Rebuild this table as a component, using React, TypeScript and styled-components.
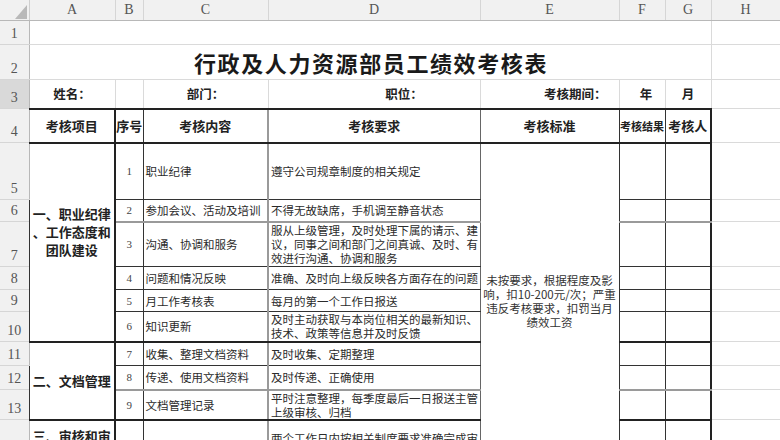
import React from 'react';
import styled, { createGlobalStyle } from 'styled-components';

const GlobalStyle = createGlobalStyle`
  html, body { margin: 0; padding: 0; background: #ffffff; overflow: hidden; }
`;

type Edge = 'grid' | 'thin' | 'mid' | 'thick' | 'gray' | 'none';
const edges: Record<Edge, string> = {
  grid: '1px solid #dadada',
  thin: '1px solid #333333',
  mid: '1px solid #666666',
  thick: '2px solid #222222',
  gray: '2px solid #9a9a9a',
  none: 'none',
};

const Sheet = styled.table`
  border-collapse: collapse;
  table-layout: fixed;
  width: 780px;
  font-family: "Noto Sans CJK SC", sans-serif;
  color: #2b2b2b;
`;

const Col = styled.col<{ $w: number }>`
  width: ${p => p.$w}px;
`;

const Row = styled.tr<{ $h: number }>`
  height: ${p => p.$h}px;
`;

const Corner = styled.th`
  padding: 0 2px 1px 0;
  height: 19px;
  background: #f1f1f1;
  border-right: 1px solid #cfcfcf;
  border-bottom: 1px solid #b8b8b8;
  vertical-align: bottom;
  text-align: right;
  line-height: 0;
`;

const ColHead = styled.th`
  padding: 0;
  height: 19px;
  background: #f1f1f1;
  border-right: 1px solid #d6d6d6;
  border-bottom: 1px solid #b8b8b8;
  font: 400 14px "Liberation Serif", serif;
  color: #555555;
  text-align: center;
  vertical-align: middle;
`;

const RowHead = styled.th<{ $active?: boolean }>`
  padding: 0 0 2px;
  background: ${p => (p.$active ? '#d9d9d9' : '#f1f1f1')};
  border-right: 1px solid #b8b8b8;
  border-bottom: 1px solid #d6d6d6;
  font: 400 14px "Liberation Serif", serif;
  line-height: 16px;
  color: #555555;
  text-align: center;
  vertical-align: bottom;
`;

const Cell = styled.td<{ $r?: Edge; $b?: Edge; $l?: Edge }>`
  padding: 0 0 0 2px;
  border-top: none;
  border-left: ${p => edges[p.$l ?? 'none']};
  border-right: ${p => edges[p.$r ?? 'grid']};
  border-bottom: ${p => edges[p.$b ?? 'grid']};
  vertical-align: middle;
  text-align: left;
  font-size: 11.5px;
  line-height: 14px;
  white-space: nowrap;
  overflow: hidden;
`;

const Title = styled(Cell)`
  text-align: center;
  font-size: 22px;
  font-weight: 700;
  letter-spacing: 1.6px;
  color: #1a1a1a;
`;

const Label = styled(Cell)<{ $align?: 'left' | 'center' | 'right'; $pl?: number; $pr?: number }>`
  text-align: ${p => p.$align ?? 'center'};
  padding-left: ${p => p.$pl ?? 0}px;
  padding-right: ${p => p.$pr ?? 0}px;
  font-size: 12.5px;
  font-weight: 700;
  color: #222222;
`;

const Head = styled(Cell)<{ $small?: boolean }>`
  padding: 0;
  text-align: center;
  font-size: ${p => (p.$small ? 11 : 13)}px;
  font-weight: 700;
  color: #222222;
`;

const Group = styled(Cell)<{ $shift?: number }>`
  padding: 0 0 ${p => p.$shift ?? 0}px;
  text-align: center;
  font-size: 13px;
  line-height: 18px;
  font-weight: 700;
  color: #222222;
`;

const Num = styled(Cell)`
  padding: 0;
  text-align: center;
  font-family: "Liberation Serif", serif;
  font-size: 11px;
  color: #444444;
`;

const Standard = styled(Cell)`
  padding: 0 2px 10px;
  text-align: center;
  line-height: 14px;
  color: #333333;
`;

const Triangle = () => (
  <svg width="12" height="14" viewBox="0 0 12 14">
    <polygon points="12,0 12,14 0,14" fill="#b9b9b9" />
  </svg>
);

const cols = [29, 86, 28, 125, 212, 139, 46, 46, 69];
const letters = ['A', 'B', 'C', 'D', 'E', 'F', 'G', 'H'];

type Bd = { b: Edge };

const BodyCells = ({ b }: Bd) => (
  <>
    <Cell $r="thin" $b={b} />
    <Cell $r="thick" $b={b} />
    <Cell $b="grid" />
  </>
);

export default function App() {
  return (
    <>
      <GlobalStyle />
      <Sheet>
        <colgroup>
          {cols.map((w, i) => (
            <Col key={i} $w={w} />
          ))}
        </colgroup>
        <tbody>
          <Row $h={19}>
            <Corner>
              <Triangle />
            </Corner>
            {letters.map(l => (
              <ColHead key={l}>{l}</ColHead>
            ))}
          </Row>

          <Row $h={24}>
            <RowHead>1</RowHead>
            <Cell colSpan={7} />
            <Cell />
          </Row>

          <Row $h={35}>
            <RowHead>2</RowHead>
            <Title colSpan={7}>行政及人力资源部员工绩效考核表</Title>
            <Cell />
          </Row>

          <Row $h={29}>
            <RowHead $active>3</RowHead>
            <Label $l="thin" $b="thick">姓名：</Label>
            <Label $b="thick" />
            <Label $b="thick">部门：</Label>
            <Label $b="thick" $pl={60}>职位：</Label>
            <Label $b="thick" $align="right" $pr={12}>考核期间：</Label>
            <Label $b="thick" $pl={8}>年</Label>
            <Label $b="thick">月</Label>
            <Cell />
          </Row>

          <Row $h={34}>
            <RowHead>4</RowHead>
            <Head $l="thin" $r="thick" $b="thick">考核项目</Head>
            <Head $r="thin" $b="thick">序号</Head>
            <Head $r="gray" $b="thick">考核内容</Head>
            <Head $r="mid" $b="thick">考核要求</Head>
            <Head $r="thin" $b="thick">考核标准</Head>
            <Head $r="thin" $b="thick" $small>考核结果</Head>
            <Head $r="thick" $b="thick">考核人</Head>
            <Cell />
          </Row>

          <Row $h={57}>
            <RowHead>5</RowHead>
            <Group rowSpan={6} $l="thin" $r="thick" $b="thick" $shift={20}>
              一、职业纪律
              <br />
              、工作态度和
              <br />
              团队建设
            </Group>
            <Num $r="thin" $b="thin">1</Num>
            <Cell $r="gray" $b="thin">职业纪律</Cell>
            <Cell $r="mid" $b="thin">遵守公司规章制度的相关规定</Cell>
            <Standard rowSpan={10} $r="thin" $b="thick">
              未按要求，根据程度及影
              <br />
              响，扣10-200元/次；严重
              <br />
              违反考核要求，扣罚当月
              <br />
              绩效工资
            </Standard>
            <BodyCells b="thin" />
          </Row>

          <Row $h={22}>
            <RowHead>6</RowHead>
            <Num $r="thin" $b="gray">2</Num>
            <Cell $r="gray" $b="gray">参加会议、活动及培训</Cell>
            <Cell $r="mid" $b="gray">不得无故缺席，手机调至静音状态</Cell>
            <BodyCells b="gray" />
          </Row>

          <Row $h={45}>
            <RowHead>7</RowHead>
            <Num $r="thin" $b="thin">3</Num>
            <Cell $r="gray" $b="thin">沟通、协调和服务</Cell>
            <Cell $r="mid" $b="thin">
              服从上级管理，及时处理下属的请示、建
              <br />
              议，同事之间和部门之间真诚、及时、有
              <br />
              效进行沟通、协调和服务
            </Cell>
            <BodyCells b="thin" />
          </Row>

          <Row $h={23}>
            <RowHead>8</RowHead>
            <Num $r="thin" $b="thin">4</Num>
            <Cell $r="gray" $b="thin">问题和情况反映</Cell>
            <Cell $r="mid" $b="thin">准确、及时向上级反映各方面存在的问题</Cell>
            <BodyCells b="thin" />
          </Row>

          <Row $h={22}>
            <RowHead>9</RowHead>
            <Num $r="thin" $b="thin">5</Num>
            <Cell $r="gray" $b="thin">月工作考核表</Cell>
            <Cell $r="mid" $b="thin">每月的第一个工作日报送</Cell>
            <BodyCells b="thin" />
          </Row>

          <Row $h={30}>
            <RowHead>10</RowHead>
            <Num $r="thin" $b="thick">6</Num>
            <Cell $r="gray" $b="thick">知识更新</Cell>
            <Cell $r="mid" $b="thick">
              及时主动获取与本岗位相关的最新知识、
              <br />
              技术、政策等信息并及时反馈
            </Cell>
            <BodyCells b="thick" />
          </Row>

          <Row $h={24}>
            <RowHead>11</RowHead>
            <Group rowSpan={3} $l="thin" $r="thick" $b="thick">
              二、文档管理
            </Group>
            <Num $r="thin" $b="thin">7</Num>
            <Cell $r="gray" $b="thin">收集、整理文档资料</Cell>
            <Cell $r="mid" $b="thin">及时收集、定期整理</Cell>
            <BodyCells b="thin" />
          </Row>

          <Row $h={24}>
            <RowHead>12</RowHead>
            <Num $r="thin" $b="gray">8</Num>
            <Cell $r="gray" $b="gray">传递、使用文档资料</Cell>
            <Cell $r="mid" $b="gray">及时传递、正确使用</Cell>
            <BodyCells b="gray" />
          </Row>

          <Row $h={29}>
            <RowHead>13</RowHead>
            <Num $r="thin" $b="thick">9</Num>
            <Cell $r="gray" $b="thick">文档管理记录</Cell>
            <Cell $r="mid" $b="thick">
              平时注意整理，每季度最后一日报送主管
              <br />
              上级审核、归档
            </Cell>
            <BodyCells b="thick" />
          </Row>

          <Row $h={50}>
            <RowHead>14</RowHead>
            <Group $l="thin" $r="thick" $b="thin">
              三、审核和审
              <br />
              批管理
            </Group>
            <Num $r="thin" $b="thin">10</Num>
            <Cell $r="gray" $b="thin">履行审核和审批权限</Cell>
            <Cell $r="mid" $b="thin">
              两个工作日内按相关制度要求准确完成审
              <br />
              核和审批工作
            </Cell>
            <BodyCells b="thin" />
          </Row>
        </tbody>
      </Sheet>
    </>
  );
}
